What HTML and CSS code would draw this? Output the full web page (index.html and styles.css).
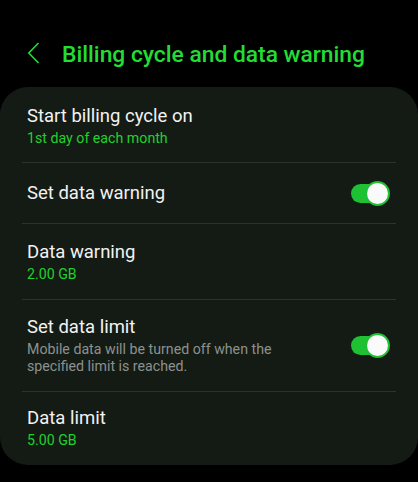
FILE: index.html
```html
<!DOCTYPE html>
<html>
<head>
<meta charset="utf-8">
<link rel="stylesheet" href="styles.css">
</head>
<body>
<header class="appbar">
  <svg class="back" width="14" height="24" viewBox="0 0 14 24"><path d="M11.5 2 L1.8 12 L11.5 22" fill="none" stroke="#22dd33" stroke-width="1.6"/></svg>
  <h1 class="title">Billing cycle and data warning</h1>
</header>
<main class="card">
  <div class="row r1">
    <div class="text">
      <div class="label">Start billing cycle on</div>
      <div class="value">1st day of each month</div>
    </div>
  </div>
  <div class="row r2">
    <div class="text"><div class="label">Set data warning</div></div>
    <div class="switch"><span class="thumb"></span></div>
  </div>
  <div class="row r3">
    <div class="text">
      <div class="label">Data warning</div>
      <div class="value">2.00 GB</div>
    </div>
  </div>
  <div class="row r4">
    <div class="text">
      <div class="label">Set data limit</div>
      <div class="desc">Mobile data will be turned off when the specified limit is reached.</div>
    </div>
    <div class="switch"><span class="thumb"></span></div>
  </div>
  <div class="row r5">
    <div class="text">
      <div class="label">Data limit</div>
      <div class="value">5.00 GB</div>
    </div>
  </div>
</main>
</body>
</html>
```
FILE: styles.css
```css
html, body {
  margin: 0;
  padding: 0;
  background: #000;
  font-family: Roboto, "Noto Sans", sans-serif;
  width: 418px;
  height: 482px;
  overflow: hidden;
}
.appbar {
  height: 87px;
  display: flex;
  align-items: center;
  padding: 22px 0 0 27px;
  box-sizing: border-box;
}
.back {
  display: block;
  margin-right: 21px;
  margin-top: -3px;
}
.title {
  margin: 0;
  font-size: 22.8px;
  font-weight: 500;
  color: #22dd33;
  letter-spacing: 0;
}
.card {
  background: #141b15;
  border-radius: 28px;
  padding: 0 22px;
  height: 378px;
  box-sizing: border-box;
}
.row {
  display: flex;
  align-items: center;
  justify-content: space-between;
  padding: 0 7px 0 5px;
  border-top: 1px solid #2c322d;
  box-sizing: border-box;
}
.row.r1 { border-top: none; height: 75px; padding-top: 2px; }
.r2 { height: 61px; }
.r3 { height: 76px; }
.r4 { height: 92px; }
.r5 { height: 74px; padding-bottom: 2px; }
.label {
  color: #f2f2f2;
  font-size: 18.5px;
  line-height: 22px;
}
.value {
  color: #20d12c;
  font-size: 14.2px;
  line-height: 18px;
  margin-top: 2px;
}
.desc {
  color: #8c918d;
  font-size: 14.2px;
  line-height: 17px;
  margin-top: 3px;
  width: 260px;
}
.switch {
  position: relative;
  width: 36px;
  height: 19px;
  border-radius: 10px;
  background: #1ec131;
  margin-right: 2px;
}
.thumb {
  position: absolute;
  right: -3px;
  top: -3px;
  width: 21px;
  height: 21px;
  border-radius: 50%;
  background: #fafafa;
  border: 2px solid #1ec131;
}
```
